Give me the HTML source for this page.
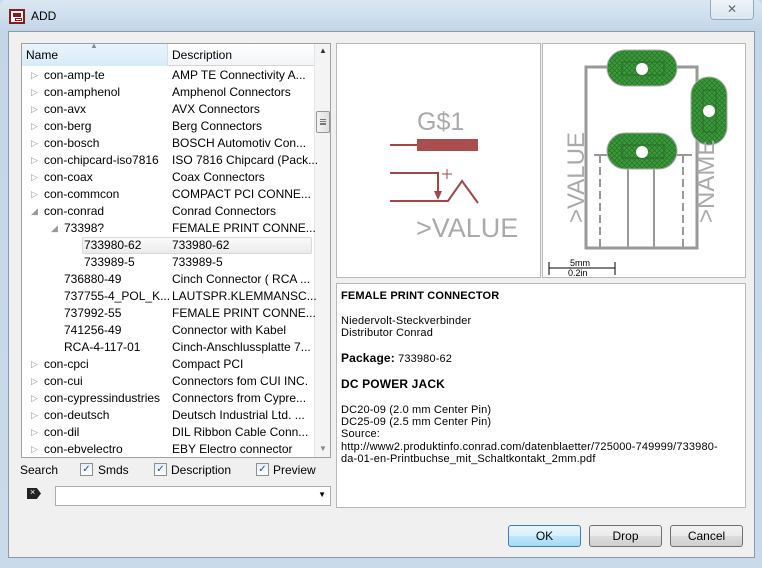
<!DOCTYPE html>
<html><head><style>
*{margin:0;padding:0;box-sizing:border-box}
body{width:762px;height:568px;overflow:hidden;background:#c9d9e8;font-family:"Liberation Sans",sans-serif;font-size:12px;color:#000;position:relative}
.frame{position:absolute;left:0;top:0;width:762px;height:568px;background:linear-gradient(#dbe8f3,#c3d6e8 30px,#c9dbeb);border-radius:6px 6px 0 0}
.client{position:absolute;left:8px;top:31px;width:747px;height:527px;background:#f0f0f0;border:1px solid #8a9aab}
.a{position:absolute}
.list{left:21px;top:43px;width:310px;height:415px;background:#fff;border:1px solid #a0a0a0;overflow:hidden}
.hdr{position:absolute;left:0;top:0;width:292px;height:22px;background:linear-gradient(#fff,#f3f5f8);border-bottom:1px solid #d5d5d5}
.row{position:absolute;left:0;height:17px;line-height:17px;white-space:nowrap;font-size:12px}
.row .n{position:absolute}
.row .d{position:absolute;left:150px}
.tri{position:absolute;color:#999;font-size:9px}
.sb{position:absolute;left:292px;top:0;width:17px;height:413px;background:#f4f4f4;border-left:1px solid #e6e6e6}
.pane{background:#fff;border:1px solid #b8b8b8}
.btn{position:absolute;top:525px;height:22px;width:73px;border:1px solid #707070;border-radius:3px;background:linear-gradient(#f2f2f2,#ebebeb 50%,#dddddd 50%,#cfcfcf);text-align:center;line-height:20px;font-size:12px}
.cb{position:absolute;width:13px;height:13px;border:1px solid #8f8f8f;background:linear-gradient(#e8eef5,#fff);font-size:10px;line-height:11px;text-align:center;color:#2a4c8c}
.desc{font-size:11px;line-height:12.4px;letter-spacing:0.15px}
</style></head><body>
<div class="frame"></div>
<div class="a" style="left:9px;top:9px;width:16px;height:15px;background:#fff;border:2px solid #8b1a1a"><div class="a" style="left:2px;top:2px;width:8px;height:4px;background:#8b1a1a"></div><div class="a" style="left:4px;top:7px;width:7px;height:3px;border:1px solid #8b1a1a"></div></div>
<div class="a" style="left:31px;top:9px;font-size:12px">ADD</div>
<div class="a" style="left:710px;top:0;width:44px;height:20px;border:1px solid #9aaabb;border-top:none;border-radius:0 0 4px 4px;background:linear-gradient(#edf3f8,#dce7f1);text-align:center;line-height:19px;color:#666;font-size:12px">✕</div>
<div class="client"></div>

<div class="a list">
 <div class="hdr"><div class="a" style="left:0;top:0;width:146px;height:22px;background:linear-gradient(#e9f4fc,#d8ebf8);border-right:1px solid #dcdcdc"></div>
 <span class="a" style="left:4px;top:4px">Name</span><span class="a" style="left:150px;top:4px">Description</span><span class="a" style="left:68px;top:-3px;font-size:8px;color:#888">▲</span></div>
 <div class="sb"><div class="a" style="left:4px;top:2px;font-size:8px;color:#333">▲</div>
 <div class="a" style="left:1px;top:67px;width:14px;height:22px;border:1px solid #979797;border-radius:2px;background:linear-gradient(90deg,#f3f3f3,#e0e0e0)"><div class="a" style="left:3px;top:7px;width:6px;height:6px;border-top:1px solid #777;border-bottom:1px solid #777"></div><div class="a" style="left:3px;top:9px;width:6px;height:1px;background:#777"></div><div class="a" style="left:3px;top:11px;width:6px;height:1px;background:#777"></div></div>
 <div class="a" style="left:4px;top:400px;font-size:8px;color:#888">▼</div></div>
 <div class="a" style="left:60px;top:193px;width:230px;height:17px;border:1px solid #d9d9d9;border-radius:2px;background:linear-gradient(#fafafa,#ebebeb)"></div>
 <div id="rows"></div>
</div>
<script>
var R=[[0,"▷","con-amp-te","AMP TE Connectivity A..."],[0,"▷","con-amphenol","Amphenol Connectors"],[0,"▷","con-avx","AVX Connectors"],[0,"▷","con-berg","Berg Connectors"],[0,"▷","con-bosch","BOSCH Automotiv Con..."],[0,"▷","con-chipcard-iso7816","ISO 7816 Chipcard (Pack..."],[0,"▷","con-coax","Coax Connectors"],[0,"▷","con-commcon","COMPACT PCI CONNE..."],[0,"◢","con-conrad","Conrad Connectors"],[1,"◢","73398?","FEMALE PRINT CONNE..."],[2,"","733980-62","733980-62"],[2,"","733989-5","733989-5"],[1,"","736880-49","Cinch Connector ( RCA ..."],[1,"","737755-4_POL_K...","LAUTSPR.KLEMMANSC..."],[1,"","737992-55","FEMALE PRINT CONNE..."],[1,"","741256-49","Connector with Kabel"],[1,"","RCA-4-117-01","Cinch-Anschlussplatte 7..."],[0,"▷","con-cpci","Compact PCI"],[0,"▷","con-cui","Connectors fom CUI INC."],[0,"▷","con-cypressindustries","Connectors from Cypre..."],[0,"▷","con-deutsch","Deutsch Industrial Ltd. ..."],[0,"▷","con-dil","DIL Ribbon Cable Conn..."],[0,"▷","con-ebvelectro","EBY Electro connector"]];
var h="";R.forEach(function(r,i){var t=23+i*17,x=22+r[0]*20;h+='<div class="row" style="top:'+t+'px;width:290px">'+(r[1]?'<span class="tri" style="left:'+(x-13)+'px;top:0">'+r[1]+'</span>':'')+'<span class="n" style="left:'+x+'px">'+r[2]+'</span><span class="d">'+r[3]+'</span></div>';});
document.getElementById("rows").innerHTML=h;
</script>

<div class="a pane" style="left:336px;top:43px;width:205px;height:235px">
<svg width="205" height="235" style="position:absolute;left:-1px;top:-1px">
<text x="81" y="87" font-family="Liberation Sans" font-size="25" fill="#aaa">G$1</text>
<line x1="54" y1="102" x2="81" y2="102" stroke="#a04848" stroke-width="2"/>
<rect x="81" y="96" width="61" height="12" fill="#a84e4e"/>
<polyline points="54,130 102,130 102,150" fill="none" stroke="#a04848" stroke-width="2"/>
<polygon points="98,148 106,148 102,157" fill="#a04848"/>
<polyline points="54,158 112,158 126,138 142,160" fill="none" stroke="#a04848" stroke-width="2"/>
<line x1="106" y1="131" x2="116" y2="131" stroke="#a04848"/><line x1="111" y1="126" x2="111" y2="136" stroke="#a04848"/>
<text x="80" y="194" font-family="Liberation Sans" font-size="27" fill="#aaa">&gt;VALUE</text>
</svg></div>
<div class="a pane" style="left:542px;top:43px;width:204px;height:235px">
<svg width="204" height="235" style="position:absolute;left:-1px;top:-1px">
<defs><pattern id="h" width="5" height="5" patternUnits="userSpaceOnUse"><rect width="5" height="5" fill="#3a9a3a"/><path d="M0 0L5 5M5 0L0 5" stroke="#287028" stroke-width="0.7"/></pattern></defs>
<rect x="44" y="24" width="111" height="181" fill="none" stroke="#999" stroke-width="3"/>
<g stroke="#999" stroke-width="2" stroke-dasharray="8,4"><line x1="58" y1="112" x2="58" y2="205"/><line x1="141" y1="112" x2="141" y2="205"/></g>
<g stroke="#999" stroke-width="2"><line x1="86" y1="112" x2="86" y2="205"/><line x1="112" y1="112" x2="112" y2="205"/><line x1="52" y1="112" x2="150" y2="112"/></g>
<rect x="65" y="7" width="70" height="36" rx="18" fill="url(#h)" stroke="#aaa"/>
<rect x="65" y="90" width="70" height="36" rx="18" fill="url(#h)" stroke="#aaa"/>
<rect x="149" y="34" width="36" height="68" rx="18" fill="url(#h)" stroke="#aaa"/>
<rect x="80" y="19" width="42" height="13" fill="none" stroke="#2c6a2c"/><rect x="80" y="102" width="42" height="13" fill="none" stroke="#2c6a2c"/><rect x="161" y="47" width="13" height="42" fill="none" stroke="#2c6a2c"/>
<circle cx="100" cy="26" r="6" fill="#fff"/><circle cx="100" cy="109" r="6" fill="#fff"/><circle cx="167" cy="68" r="6" fill="#fff"/>
<text transform="translate(42,180) rotate(-90)" font-family="Liberation Sans" font-size="24" fill="#aaa">&gt;VALUE</text>
<text transform="translate(172,180) rotate(-90)" font-family="Liberation Sans" font-size="24" fill="#aaa">&gt;NAME</text>
<line x1="7" y1="225" x2="73" y2="225" stroke="#000"/><line x1="7" y1="219" x2="7" y2="232" stroke="#000"/><line x1="73" y1="219" x2="73" y2="232" stroke="#000"/>
<text x="28" y="223" font-family="Liberation Sans" font-size="9">5mm</text><text x="26" y="233" font-family="Liberation Sans" font-size="9">0.2in</text>
</svg></div>

<div class="a pane desc" style="left:336px;top:283px;width:410px;height:225px;padding:6px 0 0 4px">
<b>FEMALE PRINT CONNECTOR</b><br><br>Niedervolt-Steckverbinder<br>Distributor Conrad<br><br><b style="font-size:12px">Package:</b> 733980-62<br><br><b style="font-size:12px">DC POWER JACK</b><br><br>DC20-09 (2.0 mm Center Pin)<br>DC25-09 (2.5 mm Center Pin)<br>Source:<br>http://www2.produktinfo.conrad.com/datenblaetter/725000-749999/733980-<br>da-01-en-Printbuchse_mit_Schaltkontakt_2mm.pdf
</div>

<span class="a" style="left:20px;top:463px">Search</span>
<div class="cb" style="left:80px;top:463px">✓</div><span class="a" style="left:98px;top:463px">Smds</span>
<div class="cb" style="left:154px;top:463px">✓</div><span class="a" style="left:171px;top:463px">Description</span>
<div class="cb" style="left:256px;top:463px">✓</div><span class="a" style="left:273px;top:463px">Preview</span>
<div class="a" style="left:27px;top:488px;width:14px;height:11px;background:#222;clip-path:polygon(0 0,70% 0,100% 50%,70% 100%,0 100%)"><span class="a" style="left:3px;top:-1px;color:#fff;font-size:9px">×</span></div>
<div class="a" style="left:55px;top:486px;width:276px;height:20px;background:#fff;border:1px solid #abadb3"><span class="a" style="right:4px;top:3px;font-size:8px">▼</span></div>

<div class="btn" style="left:508px;border-color:#3c7fb1;background:linear-gradient(#eaf6fd,#d9f0fc 50%,#bee6fd 50%,#a7d9f5)">OK</div>
<div class="btn" style="left:589px">Drop</div>
<div class="btn" style="left:670px">Cancel</div>
</body></html>
